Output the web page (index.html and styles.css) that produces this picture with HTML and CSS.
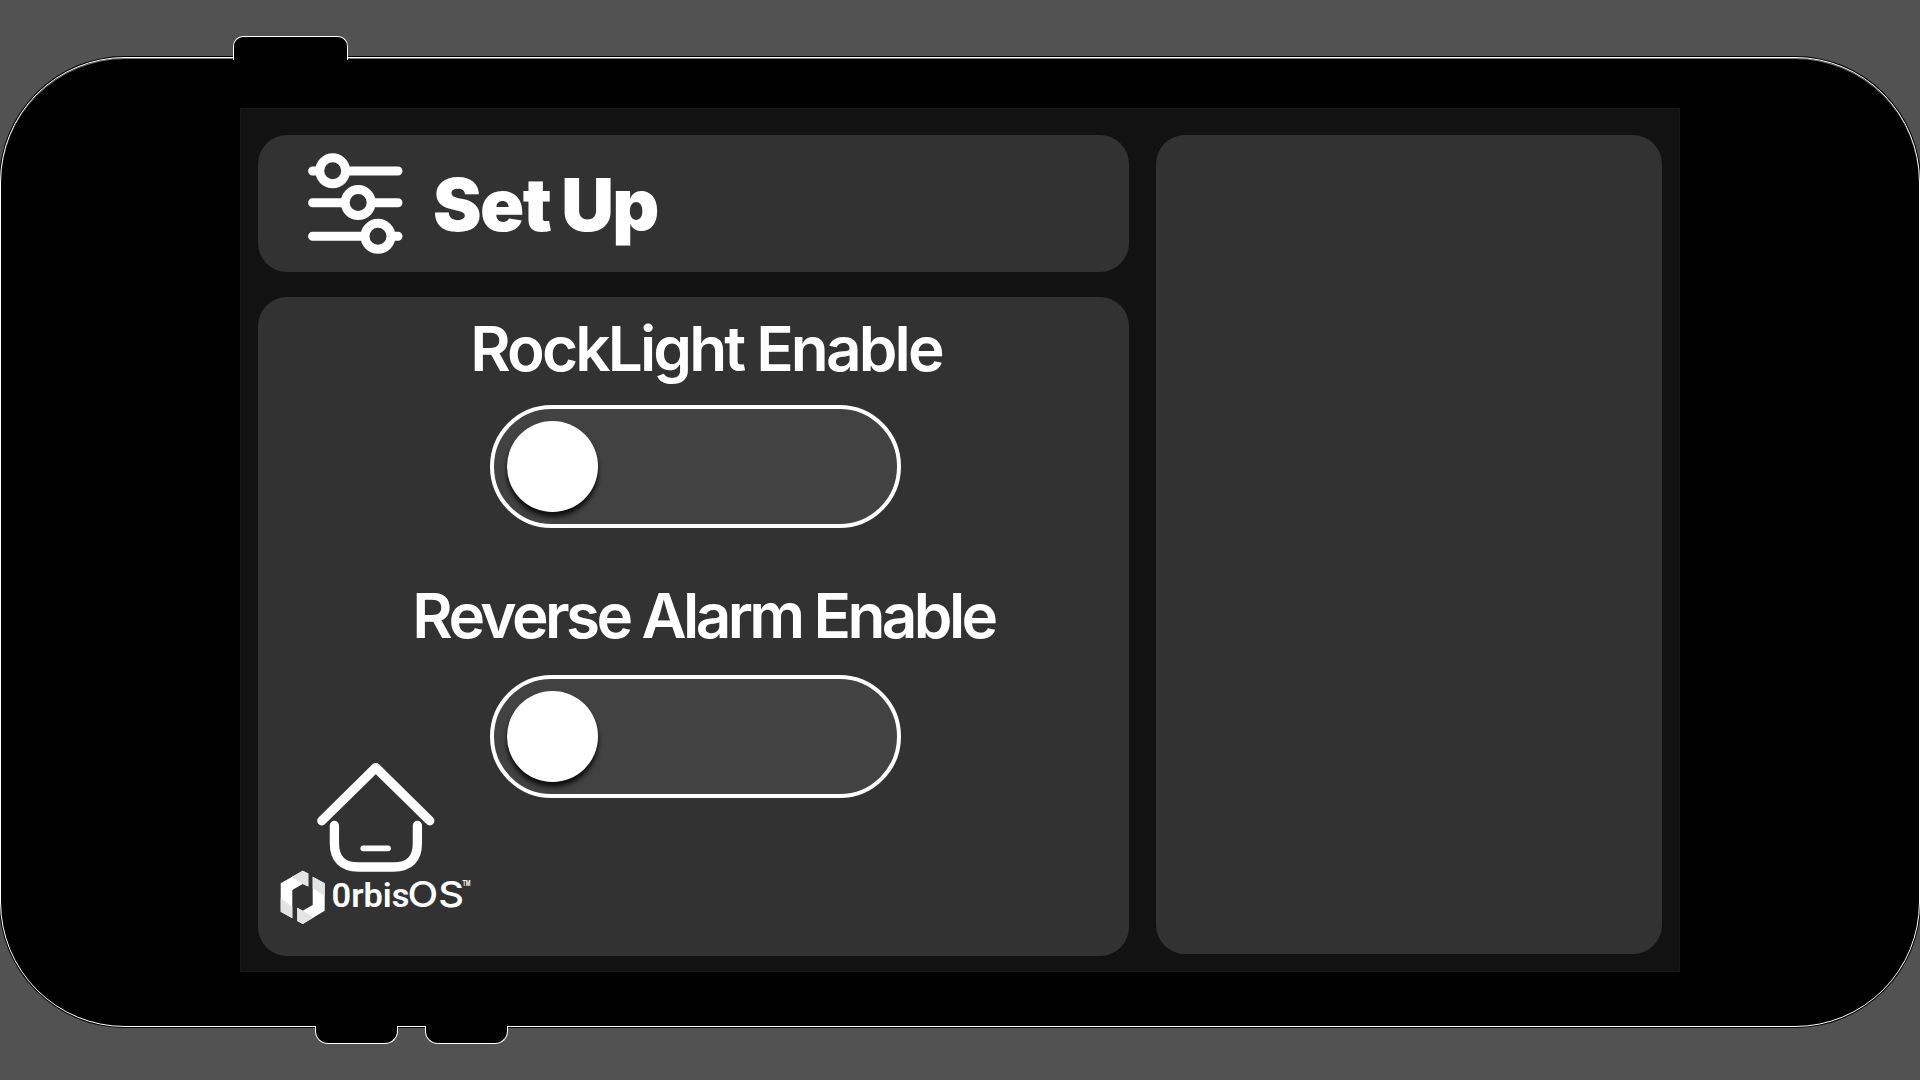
FILE: index.html
```html
<!DOCTYPE html>
<html lang="en">
<head>
    <meta charset="UTF-8">
    <meta name="viewport" content="width=device-width, initial-scale=1.0">
    <title>Set Up</title>
    <link rel="stylesheet" href="styles.css">
</head>
<body>
    <div class="device">
        <span class="side-button power"></span>
        <span class="side-button volume-up"></span>
        <span class="side-button volume-down"></span>

        <div class="screen">
            <div class="left-column">
                <header class="panel header">
                    <svg class="sliders-icon" width="98" height="104" viewBox="306 152 98 104">
                        <path d="M312.6 171H398M312.6 202.7H398M312.6 236.2H398"/>
                        <circle cx="332.7" cy="170.8" r="13"/>
                        <circle cx="358.2" cy="202.6" r="13"/>
                        <circle cx="378" cy="236.3" r="13"/>
                    </svg>
                    <h1>Set Up</h1>
                </header>

                <main class="panel settings">
                    <div class="options">
                        <h2 class="rock-title">RockLight Enable</h2>
                        <label class="toggle">
                            <input type="checkbox">
                            <span class="knob"></span>
                        </label>
                        <h2 class="alarm-title">Reverse Alarm Enable</h2>
                        <label class="toggle">
                            <input type="checkbox">
                            <span class="knob"></span>
                        </label>
                    </div>

                    <nav class="home">
                        <svg class="home-icon" width="120" height="112" viewBox="316 761 120 112">
                            <path d="M321.8 820.8L375.8 767.6L429.8 820.8"/>
                            <path d="M334.4 825.5V843Q334.4 867 358.4 867H393.4Q417.4 867 417.4 843V825.5"/>
                            <path class="door" d="M363.3 848.3H388"/>
                        </svg>
                        <svg class="logo" width="194" height="54" viewBox="280 870 194 54">
                            <path d="M280.7 883.3L302.7 870.7L308.3 873.5V886.5L302.7 884L292.3 890V918.3L280.7 911.7Z"/>
                            <path d="M312.7 876.7L324.7 883.3V910.7L302.7 924L297.3 921V907.7L302.7 910.7L312.7 905Z"/>
                            <path class="shade" d="M291.7 877L302.7 870.7L308.3 873.5V886.5L302.7 884ZM280.7 898.3L292.3 906.7V918.3L280.7 911.7ZM312.7 876.7L324.7 883.3V896L312.7 888.3ZM297.3 907.7L302.7 910.7L313.5 917.5L302.7 924L297.3 921Z"/>
                            <text class="orbis" x="331.5" y="906.7" textLength="78" lengthAdjust="spacingAndGlyphs">0rbis</text>
                            <text class="os" x="407.5" y="906.7" textLength="56.5" lengthAdjust="spacingAndGlyphs">OS</text>
                            <text class="tm" x="462.5" y="885.5" textLength="8" lengthAdjust="spacingAndGlyphs">TM</text>
                        </svg>
                    </nav>
                </main>
            </div>

            <aside class="panel side"></aside>
        </div>
    </div>
</body>
</html>
```
FILE: styles.css
```css
/* General Styles */
* {
    box-sizing: border-box;
}

body {
    margin: 0;
    padding: 57px 0 53px;
    height: 1080px;
    background: #525252;
    font-family: Inter, "Liberation Sans", sans-serif;
    color: white;
    overflow: hidden;
}

/* Device */
.device {
    position: relative;
    height: 970px;
    padding: 50px 239px 54px;
    background: #000;
    border: 1px solid white;
    border-radius: 125px;
    box-shadow: 0 0 0 1px #000, inset 0 1px 0 #777;
}

.side-button {
    position: absolute;
    background: #000;
    border: 1px solid white;
}

.power {
    top: -22px;
    left: 232px;
    width: 115px;
    height: 24px;
    border-bottom: none;
    border-radius: 10px 10px 0 0;
}

.volume-up,
.volume-down {
    bottom: -18px;
    width: 83px;
    height: 18px;
    border-top: none;
    border-radius: 0 0 13px 13px;
}

.volume-up {
    left: 314px;
}

.volume-down {
    left: 424px;
}

/* Screen */
.screen {
    display: flex;
    gap: 27px;
    height: 864px;
    padding: 26px 17px 15px;
    background: #121212;
    border: 1px solid #181818;
}

.left-column {
    display: flex;
    flex-direction: column;
    gap: 25px;
    width: 871px;
}

.panel {
    background: #323232;
    border-radius: 29px;
}

.header {
    display: flex;
    align-items: center;
    gap: 29px;
    height: 137px;
    padding-left: 48px;
}

.header h1 {
    margin: 0;
    padding-top: 2px;
    font-size: 73px;
    font-weight: 900;
    line-height: 133px;
    letter-spacing: -1.6px;
    word-spacing: -2px;
}

.sliders-icon {
    fill: #323232;
    stroke: white;
    stroke-width: 9;
    stroke-linecap: round;
}

/* Settings */
.settings {
    display: grid;
    height: 659px;
}

.options,
.home {
    grid-area: 1 / 1;
}

.options {
    display: flex;
    flex-direction: column;
    align-items: center;
    padding: 19px 0 0 4px;
}

.options h2 {
    margin: 0;
    font-size: 62px;
    font-weight: 630;
    line-height: 66px;
    white-space: nowrap;
}

.options .rock-title {
    padding-left: 21px;
    margin-bottom: 23px;
    letter-spacing: -2.85px;
}

.options .alarm-title {
    padding-left: 16px;
    margin: 55px 0 26px;
    letter-spacing: -3.6px;
}

.toggle {
    display: flex;
    width: 411px;
    height: 123px;
    padding: 12px 0 0 13px;
    background: #424242;
    border: 4px solid white;
    border-radius: 62px;
    cursor: pointer;
}

.toggle input {
    display: none;
}

.knob {
    width: 91px;
    height: 91px;
    background: white;
    border-radius: 50%;
    box-shadow: 0 5px 5px rgba(0, 0, 0, 0.8);
}

.toggle input:checked + .knob {
    margin-left: 287px;
}

/* Home and logo */
.home {
    display: flex;
    flex-direction: column;
    justify-content: flex-end;
    justify-self: start;
    padding: 0 0 32px 22px;
}

.home-icon {
    margin: 0 0 -3px 36px;
    fill: none;
    stroke: white;
    stroke-width: 9.3;
    stroke-linecap: round;
    stroke-linejoin: round;
}

.home-icon .door {
    stroke-width: 5.8;
}

.logo {
    fill: white;
}

.logo .shade {
    fill: #e4e4e4;
}

.orbis {
    font: 600 34px Roboto, sans-serif;
}

.os {
    font: 500 35px Inter, sans-serif;
}

.tm {
    font: 700 7px Inter, sans-serif;
}

/* Right side */
.side {
    width: 506px;
    height: 819px;
}
```
